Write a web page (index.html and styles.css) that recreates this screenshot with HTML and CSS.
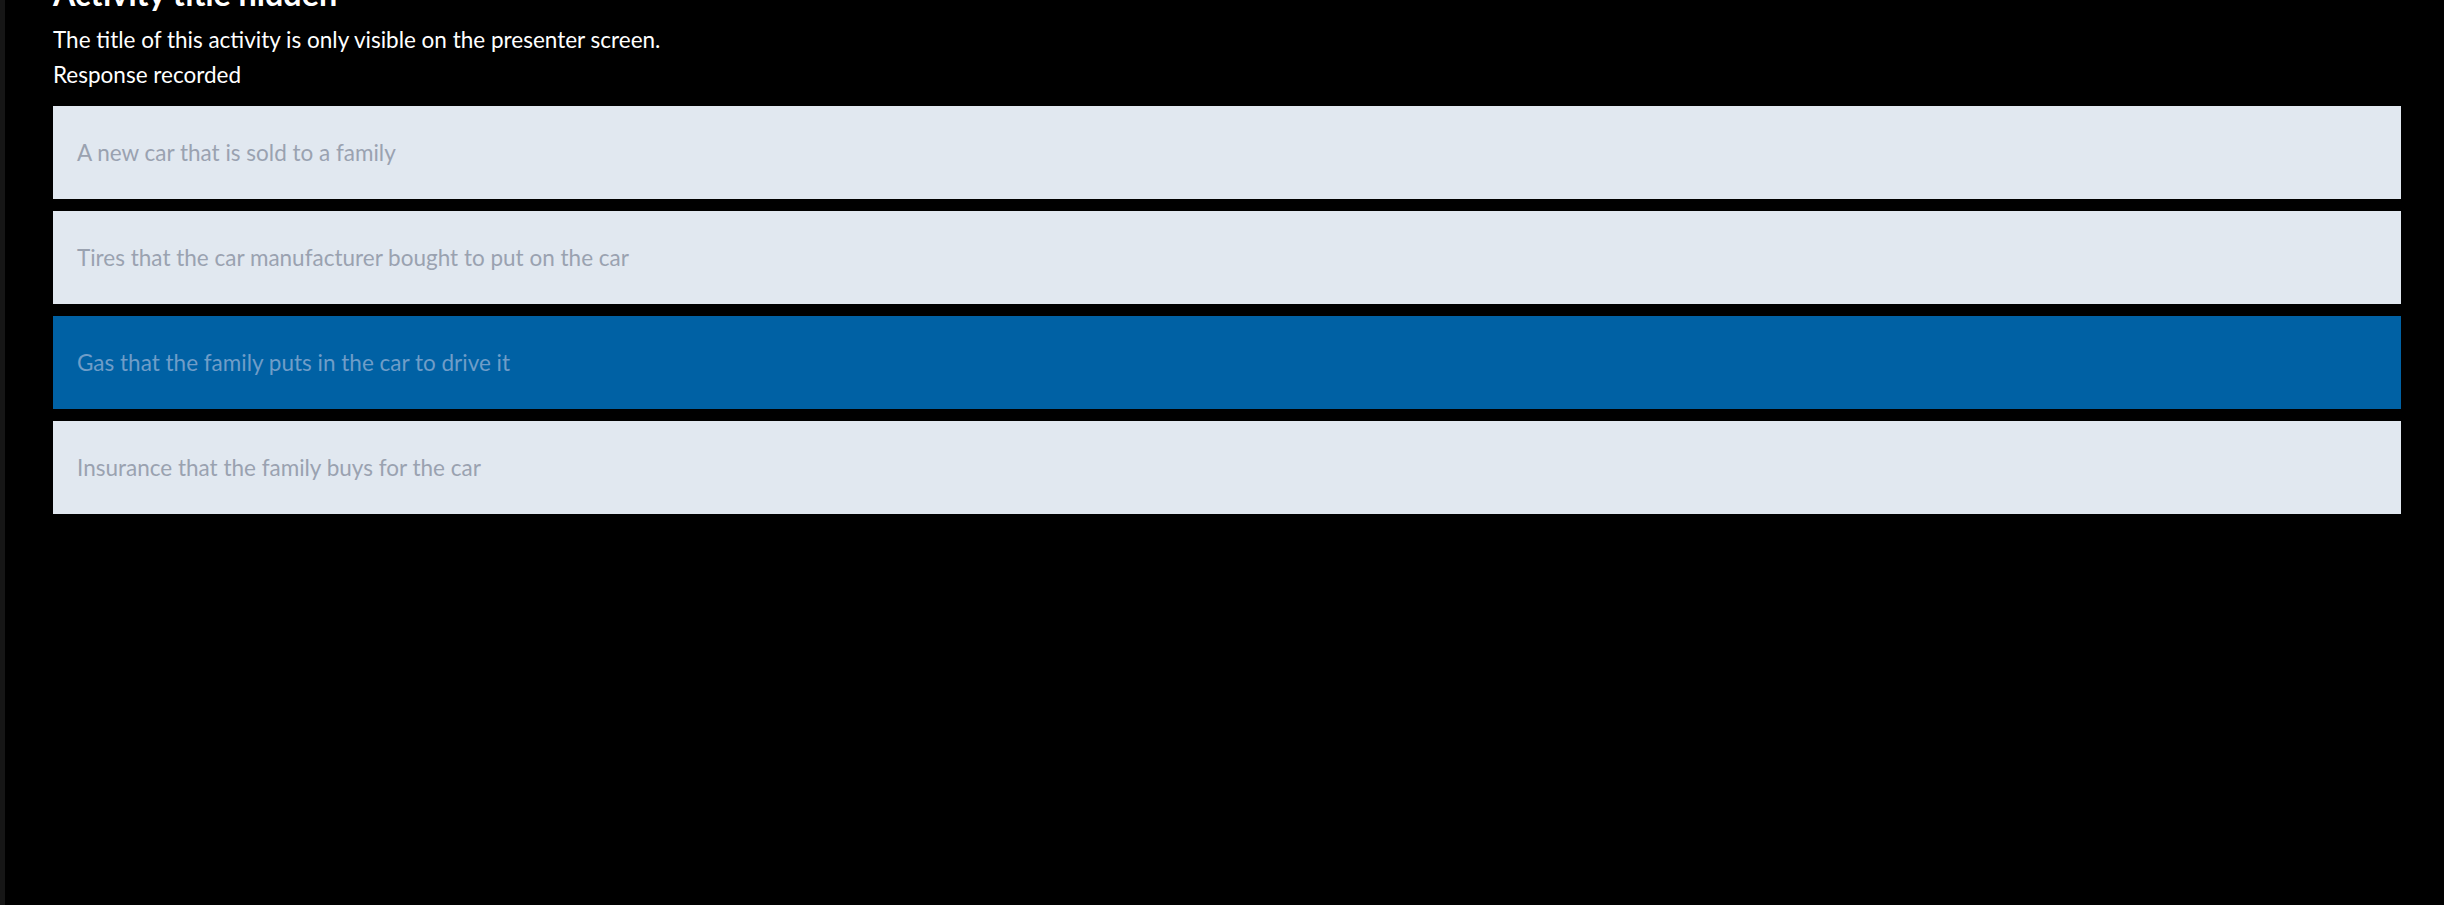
FILE: index.html
```html
<!DOCTYPE html>
<html lang="en">
<head>
<meta charset="utf-8">
<title>Activity</title>
<link rel="stylesheet" href="styles.css">
</head>
<body>
<div class="page">
  <div class="rail"></div>
  <main class="content">
    <h1 class="title">Activity title hidden</h1>
    <p class="line">The title of this activity is only visible on the presenter screen.</p>
    <p class="line">Response recorded</p>
    <ul class="options">
      <li class="option">A new car that is sold to a family</li>
      <li class="option">Tires that the car manufacturer bought to put on the car</li>
      <li class="option option-selected">Gas that the family puts in the car to drive it</li>
      <li class="option">Insurance that the family buys for the car</li>
    </ul>
  </main>
</div>
</body>
</html>
```
FILE: styles.css
```css
html, body {
  margin: 0;
  padding: 0;
  height: 100%;
  background: #000;
  overflow: hidden;
}
.page {
  display: flex;
  height: 100%;
  font-family: "Lato", "Liberation Sans", sans-serif;
}
.rail {
  width: 5px;
  flex: none;
  background: #161616;
}
.content {
  flex: 1;
  padding: 0 43px 0 48px;
}
.title {
  margin: -26px 0 0;
  font-size: 32.3px;
  line-height: 40px;
  font-weight: 700;
  color: #fff;
}
.line {
  margin: 0;
  font-size: 22.5px;
  line-height: 35px;
  color: #fff;
}
.title + .line {
  margin-top: 8px;
}
.options {
  list-style: none;
  margin: 14px 0 0;
  padding: 0;
  display: flex;
  flex-direction: column;
  gap: 12px;
}
.option {
  height: 93px;
  display: flex;
  align-items: center;
  padding: 0 24px;
  background: #e1e8f0;
  color: #9aa2b0;
  font-size: 22.5px;
  line-height: 27px;
}
.option-selected {
  background: #0061a4;
  color: #6f9dc8;
}
```
